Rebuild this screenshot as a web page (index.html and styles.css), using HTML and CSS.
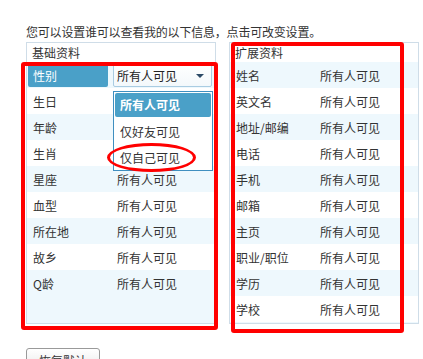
FILE: index.html
```html
<!DOCTYPE html>
<html lang="zh">
<head>
<meta charset="utf-8">
<link rel="stylesheet" href="styles.css">
</head>
<body>
<div class="page">
  <p class="intro">您可以设置谁可以查看我的以下信息，点击可改变设置。</p>
  <div class="panels">
    <div class="panel">
      <div class="panel-head">基础资料</div>
      <div class="row active-row">
        <span class="label label-active">性别</span>
        <span class="select">所有人可见<span class="caret"></span></span>
      </div>
      <div class="row"><span class="label">生日</span><span class="value covered">所有人可见</span></div>
      <div class="row"><span class="label">年龄</span><span class="value covered">所有人可见</span></div>
      <div class="row"><span class="label">生肖</span><span class="value covered">所有人可见</span></div>
      <div class="row"><span class="label">星座</span><span class="value">所有人可见</span></div>
      <div class="row"><span class="label">血型</span><span class="value">所有人可见</span></div>
      <div class="row"><span class="label">所在地</span><span class="value">所有人可见</span></div>
      <div class="row"><span class="label">故乡</span><span class="value">所有人可见</span></div>
      <div class="row"><span class="label">Q龄</span><span class="value">所有人可见</span></div>
    </div>
    <div class="panel">
      <div class="panel-head">扩展资料</div>
      <div class="row"><span class="label">姓名</span><span class="value">所有人可见</span></div>
      <div class="row"><span class="label">英文名</span><span class="value">所有人可见</span></div>
      <div class="row"><span class="label">地址/邮编</span><span class="value">所有人可见</span></div>
      <div class="row"><span class="label">电话</span><span class="value">所有人可见</span></div>
      <div class="row"><span class="label">手机</span><span class="value">所有人可见</span></div>
      <div class="row"><span class="label">邮箱</span><span class="value">所有人可见</span></div>
      <div class="row"><span class="label">主页</span><span class="value">所有人可见</span></div>
      <div class="row"><span class="label">职业/职位</span><span class="value">所有人可见</span></div>
      <div class="row"><span class="label">学历</span><span class="value">所有人可见</span></div>
      <div class="row"><span class="label">学校</span><span class="value">所有人可见</span></div>
    </div>
  </div>
  <div class="actions"><button class="btn">恢复默认</button></div>

  <ul class="dropdown">
    <li class="opt opt-active">所有人可见</li>
    <li class="opt">仅好友可见</li>
    <li class="opt">仅自己可见</li>
  </ul>
  <div class="mark mark-left"></div>
  <div class="mark mark-right"></div>
  <div class="mark mark-ellipse"></div>
</div>
</body>
</html>
```
FILE: styles.css
```css
* { box-sizing: border-box; }
html, body { margin: 0; padding: 0; background: #fff; }
body {
  font-family: "Noto Sans CJK SC", "Noto Sans", sans-serif;
  font-size: 12px;
  color: #333;
}
.page {
  position: relative;
  width: 423px;
  height: 359px;
  overflow: hidden;
  padding: 24px 0 0 26px;
}
.intro {
  margin: 0;
  height: 18px;
  line-height: 16px;
  color: #333;
  letter-spacing: -0.2px;
}
.panels {
  display: flex;
  gap: 13px;
}
.panel {
  width: 190px;
  height: 282px;
  border: 1px solid #cfdde8;
  background: #eef8fd;
  display: flex;
  flex-direction: column;
}
.panel-head {
  height: 19px;
  line-height: 19px;
  padding-left: 5px;
  background: #fff;
  flex: none;
}
.row {
  height: 26px;
  flex: none;
  display: flex;
  align-items: center;
  background: #eef8fd;
}
.row:nth-child(odd) { background: #fff; }
.panel:first-child .row:nth-child(even) { background: #eef8fd; }
.panel:first-child .row:nth-child(odd) { background: #fff; }
.active-row { padding: 2px 0; }
.label {
  width: 90px;
  padding-left: 6px;
  flex: none;
}
.value { padding-left: 0; }
.covered { visibility: hidden; }
.label-active {
  width: 80px;
  height: 23px;
  margin-left: 1px;
  margin-right: 5px;
  line-height: 23px;
  padding-left: 5px;
  background: #4aa0c8;
  color: #fff;
  border-radius: 2px;
}
.select {
  position: relative;
  width: 99px;
  height: 23px;
  line-height: 21px;
  padding-left: 3px;
  border: 1px solid #a9cce2;
  border-radius: 2px;
  background: linear-gradient(#ffffff, #f3f8fb);
  color: #222;
}
.caret {
  position: absolute;
  right: 7px;
  top: 9px;
  width: 0;
  height: 0;
  border-left: 4px solid transparent;
  border-right: 4px solid transparent;
  border-top: 4px solid #2c4a66;
}
.actions { margin-top: 24px; }
.btn {
  width: 74px;
  height: 24px;
  font: inherit;
  color: #333;
  border: 1px solid #9a9a9a;
  border-radius: 3px;
  background: linear-gradient(#ffffff, #e8e8e8);
  padding: 0;
}
.dropdown {
  position: absolute;
  left: 113px;
  top: 91px;
  width: 100px;
  height: 80px;
  margin: 0;
  padding: 1px;
  list-style: none;
  background: #fff;
  border: 1px solid #3f8fc0;
}
.opt {
  height: 26px;
  line-height: 26px;
  padding-left: 5px;
}
.opt-active {
  height: 24px;
  line-height: 24px;
  margin-bottom: 2px;
  background: #4aa0c8;
  color: #fff;
  font-weight: bold;
  border-radius: 2px;
}
.mark {
  position: absolute;
  border: 4px solid #ff0000;
  border-radius: 3px;
  pointer-events: none;
}
.mark-left { left: 21px; top: 62px; width: 197px; height: 268px; }
.mark-right { left: 231px; top: 42px; width: 173px; height: 291px; }
.mark-ellipse {
  left: 107px;
  top: 143px;
  width: 89px;
  height: 29px;
  border-width: 3px;
  border-radius: 50%;
}
```
